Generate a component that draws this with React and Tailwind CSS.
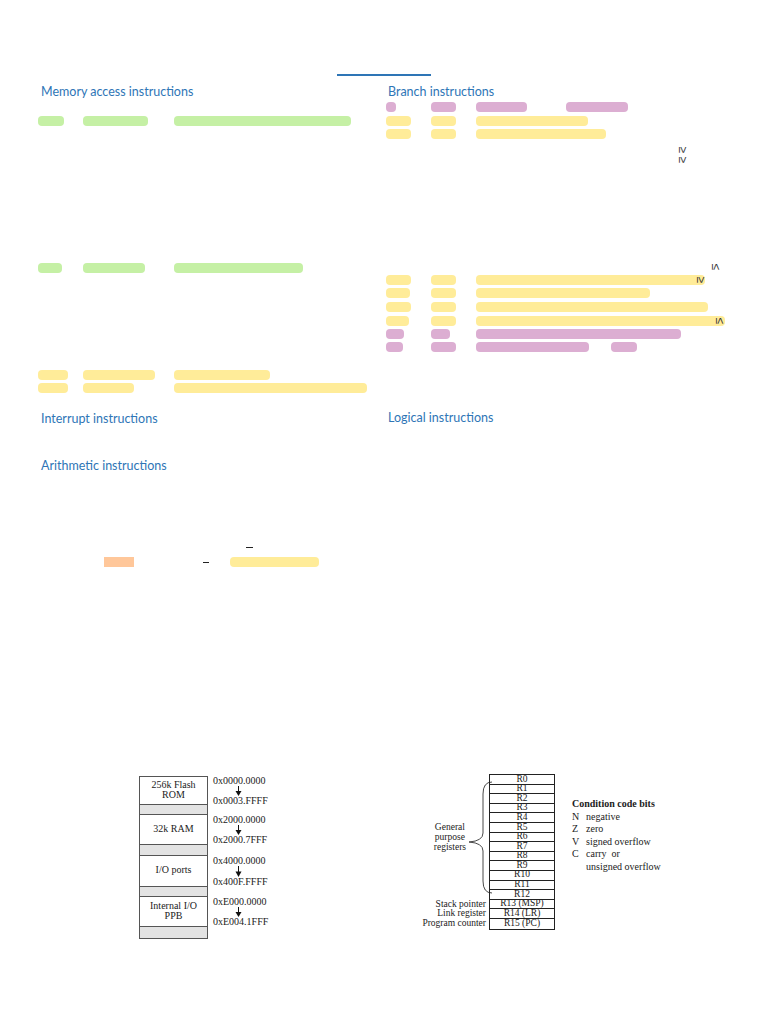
import React from "react";

const GREEN = "#c5f0a5";
const YELLOW = "#ffec99";
const PURPLE = "#dcaed2";

function Glyph({ ch, className = "", style }) {
  return (
    <div
      className={
        "flex h-[8px] items-center justify-center rotate-90 text-[12px] leading-none text-[#333] font-['Liberation_Sans',sans-serif] " +
        className
      }
      style={style}
    >
      {ch}
    </div>
  );
}

function Bar({ segs, color, glyph }) {
  let prev = 0;
  return (
    <div className="relative flex h-[10px]">
      {segs.map(([s, e], i) => {
        const el = (
          <div
            key={i}
            className="h-[10px] shrink-0 rounded-[4px]"
            style={{ marginLeft: s - prev, width: e - s, backgroundColor: color }}
          />
        );
        prev = e;
        return el;
      })}
      {glyph ? (
        <Glyph ch={glyph[0]} className="absolute top-[1px] w-[10px]" style={{ left: glyph[1] }} />
      ) : null}
    </div>
  );
}

function Heading({ children }) {
  return (
    <div className="h-[16px] pl-[3px] text-[12.5px] leading-[16px] text-[#2e75b6] font-['Lato',sans-serif]">
      {children}
    </div>
  );
}

const sections = [
  { h: 29, label: ["256k Flash", "ROM"], a: "0x0000.0000", b: "0x0003.FFFF" },
  { h: 10 },
  { h: 30, label: ["32k RAM"], a: "0x2000.0000", b: "0x2000.7FFF" },
  { h: 11 },
  { h: 31, label: ["I/O ports"], a: "0x4000.0000", b: "0x400F.FFFF" },
  { h: 10 },
  { h: 30, label: ["Internal I/O", "PPB"], a: "0xE000.0000", b: "0xE004.1FFF" },
  { h: 12 },
];

function MemoryMap() {
  return (
    <div className="flex w-[140px] flex-col pt-[4px] font-['Liberation_Serif',serif] text-[10px] text-[#222]">
      {sections.map((s, i) => (
        <div key={i} className="flex" style={{ height: s.h }}>
          <div
            className={
              "w-[69px] shrink-0 border-x border-b border-[#555] " +
              (i === 0 ? "border-t " : "") +
              (s.label ? "flex flex-col items-center justify-center pb-[2px] bg-white" : "bg-[#e3e3e3]")
            }
          >
            {s.label
              ? s.label.map((l, j) => (
                  <div key={j} className="leading-[10px]">
                    {l}
                  </div>
                ))
              : null}
          </div>
          {s.label ? (
            <div className="ml-[5px] flex flex-col">
              <div className="leading-[10px]">{s.a}</div>
              <div className="flex flex-1 pl-[22px]">
                <svg width="7" height="100%" viewBox="0 0 7 10" preserveAspectRatio="none" className="h-full">
                  <line x1="3.5" y1="0" x2="3.5" y2="6" stroke="#111" strokeWidth="1" />
                  <polygon points="0.5,5 6.5,5 3.5,10" fill="#111" />
                </svg>
              </div>
              <div className="leading-[10px]">{s.b}</div>
            </div>
          ) : null}
        </div>
      ))}
    </div>
  );
}

const regs = [
  "R0", "R1", "R2", "R3", "R4", "R5", "R6", "R7", "R8", "R9", "R10", "R11", "R12",
  "R13 (MSP)", "R14 (LR)", "R15 (PC)",
];

function Registers() {
  return (
    <div className="ml-[141px] mt-[2px] flex font-['Liberation_Serif',serif] text-[9.5px] text-[#222]">
      <div className="flex w-[66px] flex-col pt-[1px]">
        <div className="flex h-[124.8px] items-center justify-end">
          <div className="text-center leading-[10px]">
            <div>General</div>
            <div>purpose</div>
            <div>registers</div>
          </div>
          <svg width="25" height="125" viewBox="0 0 25 125" className="ml-[1px] mr-[-6px] shrink-0">
            <path
              d="M25 7 Q16 7 16 19 L16 58 Q16 66 2 67 Q16 68 16 76 L16 106 Q16 118 25 118"
              fill="none"
              stroke="#333"
              strokeWidth="0.9"
            />
          </svg>
        </div>
        <div className="h-[9.6px] text-right leading-[9.6px]">Stack pointer</div>
        <div className="h-[9.6px] text-right leading-[9.6px]">Link register</div>
        <div className="h-[9.6px] text-right leading-[9.6px]">Program counter</div>
      </div>
      <div className="ml-[3px] w-[66px] border border-[#222]">
        {regs.map((r, i) => (
          <div
            key={r}
            className={
              "flex h-[9.6px] items-center justify-center leading-none " +
              (i < regs.length - 1 ? "border-b border-[#222]" : "")
            }
          >
            {r}
          </div>
        ))}
      </div>
      <div className="ml-[17px] mt-[24px] text-[10px] leading-[12.5px] text-[#222]">
        <div className="font-bold">Condition code bits</div>
        <div className="flex"><span className="w-[14px]">N</span><span>negative</span></div>
        <div className="flex"><span className="w-[14px]">Z</span><span>zero</span></div>
        <div className="flex"><span className="w-[14px]">V</span><span>signed overflow</span></div>
        <div className="flex"><span className="w-[14px]">C</span><span>carry&nbsp; or</span></div>
        <div className="flex"><span className="w-[14px]"></span><span>unsigned overflow</span></div>
      </div>
    </div>
  );
}

export default function App() {
  return (
    <div className="relative h-[1024px] w-[768px] overflow-hidden bg-white">
      <div className="pl-[337px] pt-[74px]">
        <div className="h-[2px] w-[94px] bg-[#2e75b6]" />
      </div>
      <div className="mt-[8px] flex h-[688px]">
        {/* left column */}
        <div className="w-[385px] shrink-0 pl-[38px]">
          <Heading>Memory access instructions</Heading>
          <div className="mt-[16px]">
            <Bar color={GREEN} segs={[[0, 26], [45, 110], [136, 313]]} />
          </div>
          <div className="mt-[137px]">
            <Bar color={GREEN} segs={[[0, 24], [45, 107], [136, 265]]} />
          </div>
          <div className="mt-[97px]">
            <Bar color={YELLOW} segs={[[0, 30], [45, 117], [136, 232]]} />
          </div>
          <div className="mt-[3px]">
            <Bar color={YELLOW} segs={[[0, 30], [45, 96], [136, 329]]} />
          </div>
          <div className="mt-[18px]">
            <Heading>Interrupt instructions</Heading>
          </div>
          <div className="mt-[31px]">
            <Heading>Arithmetic instructions</Heading>
          </div>
          <div className="ml-[208px] mt-[73px] h-[1px] w-[7px] bg-[#222]" />
          <div className="mt-[9px] flex h-[10px] items-center">
            <div className="ml-[66px] h-[10px] w-[30px] bg-[#ffc79a]" />
            <div className="ml-[69px] h-[1px] w-[6px] bg-[#222]" />
            <div className="ml-[21px] h-[10px] w-[89px] rounded-[4px] bg-[#ffec99]" />
          </div>
        </div>
        {/* right column */}
        <div className="flex-1">
          <Heading>Branch instructions</Heading>
          <div className="mt-[2px]">
            <Bar color={PURPLE} segs={[[1, 11], [46, 71], [91, 142], [181, 243]]} />
          </div>
          <div className="mt-[4px]">
            <Bar color={YELLOW} segs={[[1, 26], [46, 71], [91, 203]]} />
          </div>
          <div className="mt-[3px]">
            <Bar color={YELLOW} segs={[[1, 26], [46, 71], [91, 221]]} />
          </div>
          <Glyph ch="≥ ≥" className="ml-[286px] mt-[12px] w-[24px]" />
          <Glyph ch="≤" className="ml-[326px] mt-[104px] w-[10px]" />
          <div className="mt-[4px]">
            <Bar color={YELLOW} segs={[[1, 26], [46, 71], [91, 320]]} glyph={["≥", 311]} />
          </div>
          <div className="mt-[3px]">
            <Bar color={YELLOW} segs={[[1, 25], [46, 71], [91, 265]]} />
          </div>
          <div className="mt-[4px]">
            <Bar color={YELLOW} segs={[[1, 26], [46, 71], [91, 323]]} />
          </div>
          <div className="mt-[4px]">
            <Bar color={YELLOW} segs={[[1, 24], [46, 71], [91, 340]]} glyph={["≤", 330]} />
          </div>
          <div className="mt-[3px]">
            <Bar color={PURPLE} segs={[[1, 19], [46, 65], [91, 296]]} />
          </div>
          <div className="mt-[3px]">
            <Bar color={PURPLE} segs={[[1, 18], [46, 71], [91, 204], [226, 252]]} />
          </div>
          <div className="mt-[58px]">
            <Heading>Logical instructions</Heading>
          </div>
        </div>
      </div>
      <div className="flex items-start">
        <div className="ml-[139px]">
          <MemoryMap />
        </div>
        <Registers />
      </div>
    </div>
  );
}
